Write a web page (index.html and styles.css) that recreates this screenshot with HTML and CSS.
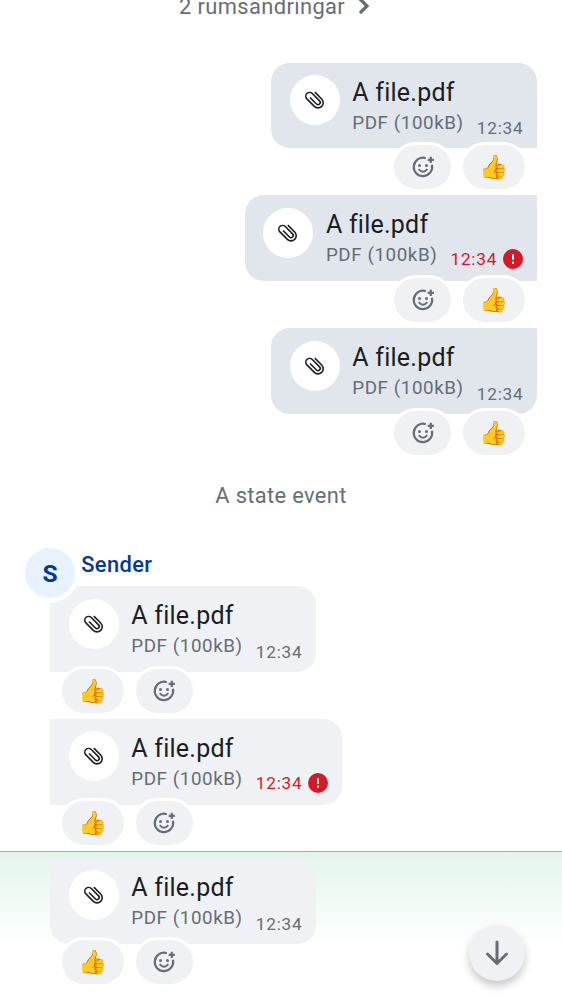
FILE: index.html
```
<!DOCTYPE html>
<html lang="sv">
<head>
<meta charset="utf-8">
<title>Timeline</title>
<link rel="stylesheet" href="styles.css">
</head>
<body>
<svg class="symbols" aria-hidden="true">
  <symbol id="clip" viewBox="-11.4 -12.2 24 24">
    <path transform="rotate(45)" d="M-5.4-6H4.3A5.2 5.2 0 0 1 4.3 4.4H-6.2A3.8 3.8 0 0 1-6.2-3.2H4.1A2.2 2.2 0 0 1 4.1 1.2H-5" fill="none" stroke="currentColor" stroke-width="1.6"/>
  </symbol>
  <symbol id="react" viewBox="0 0 24 24">
    <path d="M14.8 3.2A9.2 9.2 0 1 0 20.9 9.8" fill="none" stroke="currentColor" stroke-width="2.2"/>
    <path d="M19.8 1.7V7.9M16.7 4.8H22.9" fill="none" stroke="currentColor" stroke-width="2.2"/>
    <circle cx="8.5" cy="10.5" r="1.5" fill="currentColor"/>
    <circle cx="15.5" cy="10.5" r="1.5" fill="currentColor"/>
    <path d="M7.7 14.2Q12 19.4 16.3 14.2" fill="none" stroke="currentColor" stroke-width="2"/>
  </symbol>
  <symbol id="error" viewBox="0 0 20 20">
    <circle cx="10" cy="10" r="10" fill="#d51928"/>
    <path d="M10 6V10M10 13.2V14" fill="none" stroke="#fff" stroke-width="2" stroke-linecap="round"/>
  </symbol>
</svg>
<main class="timeline">
  <div class="group-toggle"><span>2 rumsändringar</span><svg class="chevron" viewBox="0 0 12 18"><path d="M2 2L9 9L2 16" fill="none" stroke="currentColor" stroke-width="3.2"/></svg></div>

  <section class="outgoing">
    <article class="message">
      <div class="bubble first"><span class="file-icon"><svg><use href="#clip"/></svg></span><div class="file"><p class="name">A file.pdf</p><p class="info">PDF (100kB)</p></div><time>12:34</time></div>
      <div class="reactions"><span class="pill add"><svg><use href="#react"/></svg></span><span class="pill thumb">👍️</span></div>
    </article>
    <article class="message">
      <div class="bubble middle failed"><span class="file-icon"><svg><use href="#clip"/></svg></span><div class="file"><p class="name">A file.pdf</p><p class="info">PDF (100kB)</p></div><time>12:34</time><svg class="error"><use href="#error"/></svg></div>
      <div class="reactions"><span class="pill add"><svg><use href="#react"/></svg></span><span class="pill thumb">👍️</span></div>
    </article>
    <article class="message">
      <div class="bubble last"><span class="file-icon"><svg><use href="#clip"/></svg></span><div class="file"><p class="name">A file.pdf</p><p class="info">PDF (100kB)</p></div><time>12:34</time></div>
      <div class="reactions"><span class="pill add"><svg><use href="#react"/></svg></span><span class="pill thumb">👍️</span></div>
    </article>
  </section>

  <p class="state-event">A state event</p>

  <section class="incoming">
    <header class="sender"><span class="avatar">S</span><span class="sender-name">Sender</span></header>
    <article class="message">
      <div class="bubble first"><span class="file-icon"><svg><use href="#clip"/></svg></span><div class="file"><p class="name">A file.pdf</p><p class="info">PDF (100kB)</p></div><time>12:34</time></div>
      <div class="reactions"><span class="pill thumb">👍️</span><span class="pill add"><svg><use href="#react"/></svg></span></div>
    </article>
    <article class="message">
      <div class="bubble middle failed"><span class="file-icon"><svg><use href="#clip"/></svg></span><div class="file"><p class="name">A file.pdf</p><p class="info">PDF (100kB)</p></div><time>12:34</time><svg class="error"><use href="#error"/></svg></div>
      <div class="reactions"><span class="pill thumb">👍️</span><span class="pill add"><svg><use href="#react"/></svg></span></div>
    </article>
    <div class="highlight">
      <article class="message">
        <div class="bubble last"><span class="file-icon"><svg><use href="#clip"/></svg></span><div class="file"><p class="name">A file.pdf</p><p class="info">PDF (100kB)</p></div><time>12:34</time></div>
        <div class="reactions"><span class="pill thumb">👍️</span><span class="pill add"><svg><use href="#react"/></svg></span></div>
      </article>
    </div>
  </section>
</main>
<button class="jump" aria-label="Scroll to bottom"><svg viewBox="0 0 24 26"><path d="M12 2V23M2.5 14L12 23.5L21.5 14" fill="none" stroke="currentColor" stroke-width="3" stroke-linecap="round" stroke-linejoin="round"/></svg></button>
</body>
</html>
```
FILE: styles.css
```
* { box-sizing: border-box; }
body {
  margin: 0;
  height: 1000px;
  overflow: hidden;
  background: #fff;
  color: #1b1d22;
  font-family: Roboto, "Liberation Sans", sans-serif;
}
p { margin: 0; }
.symbols { position: absolute; width: 0; height: 0; }
.timeline { display: flex; flex-direction: column; }
.group-toggle {
  display: flex;
  height: 62.5px;
  padding-left: 179px;
  gap: 13px;
  color: #656d77;
  font-size: 21.875px;
  letter-spacing: 0.39px;
  line-height: 31px;
}
.group-toggle span { margin-top: -9px; }
.chevron { width: 12px; height: 18px; margin-top: -3px; }
.message { display: flex; flex-direction: column; height: 132.8px; }
.bubble {
  display: flex;
  flex: none;
  width: 266px;
  height: 85.9px;
  padding: 12.5px 0 0 18.75px;
  border-radius: 18.75px;
}
.bubble.failed { width: 292.3px; }
.file-icon {
  display: grid;
  place-items: center;
  flex: none;
  width: 50px;
  height: 50px;
  margin-right: 12.5px;
  border-radius: 50%;
  background: #fff;
}
.file-icon svg { width: 24px; height: 24px; }
.file { flex: none; width: 124.5px; }
.name {
  padding-top: 0.7px;
  font-size: 25px;
  line-height: 34px;
  letter-spacing: 0.24px;
}
.info {
  color: #656d77;
  font-size: 18.75px;
  line-height: 26px;
  letter-spacing: 0.59px;
}
time {
  margin-top: 42.4px;
  color: #656d77;
  font-size: 17.2px;
  line-height: 22px;
  letter-spacing: 0.78px;
}
.failed time { margin-top: 40.6px; color: #d51928; }
.error { width: 20px; height: 20px; margin: 41.6px 0 0 5.7px; }
.reactions {
  display: flex;
  gap: 6.25px;
  margin-top: -6.3px;
}
.pill {
  display: grid;
  place-items: center;
  height: 50px;
  border: 3.125px solid #fff;
  border-radius: 25px;
  background: #f0f1f5;
}
.add { width: 62.5px; color: #656d77; }
.add svg { width: 24px; height: 24px; }
.thumb {
  width: 67.5px;
  padding-right: 1px;
  font-family: "Noto Color Emoji", Roboto, sans-serif;
  font-size: 23.4px;
  line-height: 30px;
}
.outgoing .message { align-items: flex-end; padding-right: 25px; }
.outgoing .bubble { background: #e1e6ec; }
.outgoing .first { border-bottom-right-radius: 0; }
.outgoing .middle { border-top-right-radius: 0; border-bottom-right-radius: 0; }
.outgoing .last { border-top-right-radius: 0; }
.outgoing .reactions { margin-right: 9.4px; }
.outgoing .thumb { padding-right: 0.5px; }
.state-event {
  margin-top: 19px;
  height: 62px;
  text-align: center;
  color: #656d77;
  font-size: 21.875px;
  line-height: 31px;
  letter-spacing: 0.35px;
}
.incoming .message { padding-left: 50px; }
.incoming .bubble { background: #f0f1f5; }
.incoming .first { border-top-left-radius: 0; border-bottom-left-radius: 0; }
.incoming .middle { border-top-left-radius: 0; border-bottom-left-radius: 0; }
.incoming .last { border-top-left-radius: 0; }
.incoming .reactions { margin-left: 9.4px; }
.sender {
  position: relative;
  display: flex;
  height: 44.2px;
  padding-left: 25px;
}
.avatar {
  display: grid;
  place-items: center;
  flex: none;
  width: 50px;
  height: 50px;
  margin-top: 6.4px;
  border-radius: 50%;
  background: #e7f2ff;
  box-shadow: 0 0 0 4.7px #fff;
  color: #043894;
  font-size: 24.5px;
  font-weight: 700;
}
.sender-name {
  margin: 7px 0 0 6.2px;
  color: #043894;
  font-size: 21.875px;
  font-weight: 500;
  line-height: 31px;
  letter-spacing: 0.4px;
}
.highlight {
  height: 149.6px;
  margin-top: -0.6px;
  padding-top: 5.8px;
  border-top: 1px solid #73c3a4;
  background: linear-gradient(#e2f6ec, #fff 94px);
}
.jump {
  position: absolute;
  right: 37.5px;
  bottom: 19px;
  display: grid;
  place-items: center;
  width: 56px;
  height: 56px;
  padding: 0;
  border: 0;
  border-radius: 50%;
  background: #f0f1f5;
  color: #656d77;
  box-shadow: 0 5px 9px rgba(0, 0, 0, 0.22);
}
.jump svg { width: 24px; height: 26px; }
```
